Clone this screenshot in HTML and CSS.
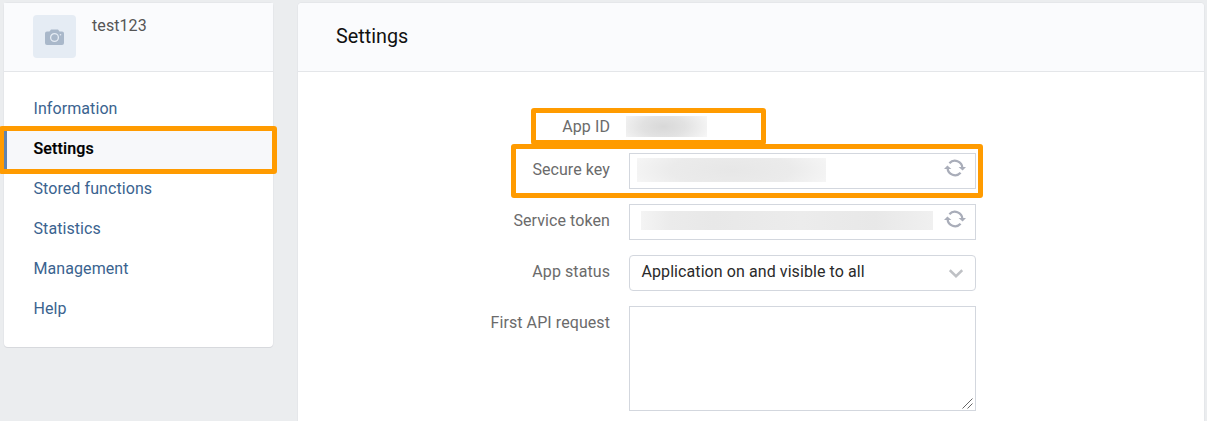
FILE: index.html
```html
<!DOCTYPE html>
<html lang="en">
<head>
<meta charset="utf-8">
<title>Settings</title>
<link rel="stylesheet" href="styles.css">
</head>
<body>
<svg class="sprite" aria-hidden="true">
  <symbol id="refresh" viewBox="0 0 22 18">
    <path d="M5.4 4.200A7.500 7.500 0 0 1 18.400 9M16.600 13.800A7.500 7.500 0 0 1 3.600 9" fill="none" stroke="#a9adb9" stroke-width="2.300"/>
    <path d="M14.600 8H22L18.600 11.500ZM0 10H7.400L3.400 6.500Z" fill="#a9adb9"/>
  </symbol>
</svg>
<div class="page">
  <aside class="card sidebar">
    <div class="profile">
      <div class="avatar">
        <svg width="19" height="16" viewBox="0 0 19 16"><path d="M2 2.5H4.5L6 .5H13L14.5 2.5H17A2 2 0 0 1 19 4.5V14A2 2 0 0 1 17 16H2A2 2 0 0 1 0 14V4.500A2 2 0 0 1 2 2.500Z" fill="#a9b8ca"/><circle cx="9.500" cy="8.500" r="3.900" fill="none" stroke="#e5ecf4" stroke-width="1.300"/><circle cx="15.500" cy="5.800" r=".8" fill="#e5ecf4"/></svg>
      </div>
      <span class="name">test123</span>
    </div>
    <nav class="menu">
      <a class="item">Information</a>
      <a class="item active">Settings<span class="mark mark-menu"></span></a>
      <a class="item">Stored functions</a>
      <a class="item">Statistics</a>
      <a class="item">Management</a>
      <a class="item">Help</a>
    </nav>
  </aside>
  <main class="card content">
    <h1 class="title">Settings</h1>
    <div class="form">
      <div class="row row-id">
        <span class="label">App ID</span>
        <span class="redacted redacted-id"></span>
        <span class="mark mark-id"></span>
      </div>
      <div class="row">
        <span class="label">Secure key</span>
        <div class="field"><span class="redacted redacted-key"></span><svg class="refresh"><use href="#refresh"/></svg></div>
        <span class="mark mark-key"></span>
      </div>
      <div class="row">
        <span class="label">Service token</span>
        <div class="field"><span class="redacted redacted-token"></span><svg class="refresh"><use href="#refresh"/></svg></div>
      </div>
      <div class="row">
        <span class="label">App status</span>
        <div class="field select"><span class="value">Application on and visible to all</span><svg class="chevron" viewBox="0 0 14 9"><path d="M.8 1.200L7 7.200L13.200 1.200" fill="none" stroke="#bfc1c5" stroke-width="2.500"/></svg></div>
      </div>
      <div class="row">
        <span class="label">First API request</span>
        <div class="area-wrap">
          <textarea class="area"></textarea>
          <svg class="grip" viewBox="0 0 11 11"><path d="M.5 10.500L10.500 .5M5.500 10.500L10.500 5.500" stroke="#666" stroke-width="1"/></svg>
        </div>
      </div>
    </div>
  </main>
</div>
</body>
</html>
```
FILE: styles.css
```css
* { box-sizing: border-box; }
body {
  margin: 0;
  height: 421px;
  overflow: hidden;
  background: #ebedef;
  font: 16px/20px Roboto, sans-serif;
  letter-spacing: .08px;
}
.sprite { display: none; }
.page {
  display: flex;
  align-items: flex-start;
  gap: 25px;
  padding: 3px 3px 0 4px;
}
.card {
  background: #fff;
  border-radius: 4px;
  box-shadow: 0 1px 0 #d7d9dd, 0 0 0 1px #e5e7ea;
}
.sidebar { width: 269px; height: 344px; }
.profile {
  display: flex;
  gap: 16px;
  height: 69px;
  padding: 12px 29px;
  background: #fafbfd;
  border-bottom: 1px solid #e4e6e9;
}
.avatar {
  display: flex;
  align-items: center;
  justify-content: center;
  width: 43px;
  height: 43px;
  border-radius: 4px;
  background: #e5ecf4;
}
.name { color: #555; padding-top: 1px; }
.menu { padding-top: 17px; }
.item {
  display: block;
  position: relative;
  height: 40px;
  padding: 10px 0 0 29.5px;
  color: #3a638f;
}
.active {
  background: #f7f8fa;
  box-shadow: inset 3px 0 #5f83b0;
  color: #000;
  font-weight: 500;
  letter-spacing: .15px;
  -webkit-text-stroke: .2px #000;
}
.mark {
  position: absolute;
  z-index: 1;
  border: 5px solid #ff9b00;
  border-radius: 3px;
}
.mark-menu { left: -5px; top: -3px; width: 278px; height: 48px; }
.content { flex: 1; height: 430px; }
.title {
  margin: 0;
  height: 69px;
  padding: 22px 38px 20px;
  background: #fafbfd;
  border-bottom: 1px solid #e4e6e9;
  border-radius: 4px 4px 0 0;
  font-size: 19.8px;
  line-height: 24px;
  font-weight: 400;
  letter-spacing: 0;
  color: #111;
}
.form {
  display: flex;
  flex-direction: column;
  gap: 15px;
  padding: 44px 0 0;
}
.row {
  position: relative;
  display: flex;
  align-items: flex-start;
}
.row-id { height: 22px; }
.label {
  width: 312px;
  margin-right: 19px;
  padding-top: 7px;
  color: #6b6b6b;
  text-align: right;
}
.row-id .label { padding-top: 1px; margin-right: 16px; }
.field {
  display: flex;
  width: 347px;
  height: 36px;
  padding: 4px 9px 0 7px;
  border: 1px solid #d3d7de;
}
.refresh { width: 22px; height: 18px; margin-left: auto; margin-top: 1px; }
.redacted-id {
  width: 81px;
  height: 21px;
  background: radial-gradient(ellipse 60% 110% at 46% 50%, #d8d8d8, #e2e2e2 45%, #f7f7f7 100%);
}
.redacted-key {
  width: 189px;
  height: 24px;
  background: radial-gradient(ellipse 58% 130% at 50% 50%, #e7e7e7, #ebebeb 55%, #f7f7f7 100%);
}
.redacted-token {
  width: 292px;
  height: 19px;
  margin: 2px 0 0 4px;
  background: linear-gradient(90deg, #f4f4f4, #ebebeb 10%, #e8e8e8 25%, #ececec 55%, #e8e8e8 80%, #f0f0f0);
}
.select { padding: 6px 12px 0 11.5px; border-radius: 4px; }
.value { color: #2a2a2a; }
.chevron { width: 14px; height: 9px; margin: 7px 0 0 auto; }
.area-wrap { position: relative; }
.area {
  display: block;
  width: 347px;
  height: 105px;
  border: 1px solid #d3d7de;
  background: #fff;
  resize: none;
}
.grip { position: absolute; right: 3px; bottom: 2px; width: 11px; height: 11px; }
.mark-id { left: 232.5px; top: -8px; width: 235px; height: 37px; }
.mark-key { left: 213px; top: -9px; width: 472px; height: 54px; }
```
